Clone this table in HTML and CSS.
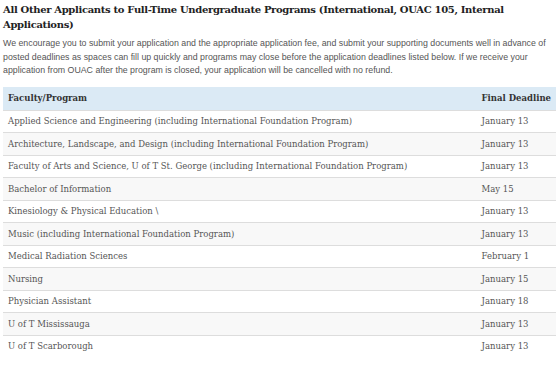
FILE: index.html
```html
<!DOCTYPE html>
<html>
<head>
<meta charset="utf-8">
<link rel="stylesheet" href="styles.css">
</head>
<body>
<div class="page">
  <h2 class="title">All Other Applicants to Full-Time Undergraduate Programs (International, OUAC 105, Internal Applications)</h2>
  <p class="intro">We encourage you to submit your application and the appropriate application fee, and submit your supporting documents well in advance of posted deadlines as spaces can fill up quickly and programs may close before the application deadlines listed below. If we receive your application from OUAC after the program is closed, your application will be cancelled with no refund.</p>
  <table class="deadlines">
    <thead>
      <tr><th class="prog">Faculty/Program</th><th class="date">Final Deadline</th></tr>
    </thead>
    <tbody>
      <tr><td>Applied Science and Engineering (including International Foundation Program)</td><td>January 13</td></tr>
      <tr><td>Architecture, Landscape, and Design (including International Foundation Program)</td><td>January 13</td></tr>
      <tr><td>Faculty of Arts and Science, U of T St. George (including International Foundation Program)</td><td>January 13</td></tr>
      <tr><td>Bachelor of Information</td><td>May 15</td></tr>
      <tr><td>Kinesiology &amp; Physical Education \</td><td>January 13</td></tr>
      <tr><td>Music (including International Foundation Program)</td><td>January 13</td></tr>
      <tr><td>Medical Radiation Sciences</td><td>February 1</td></tr>
      <tr><td>Nursing</td><td>January 15</td></tr>
      <tr><td>Physician Assistant</td><td>January 18</td></tr>
      <tr><td>U of T Mississauga</td><td>January 13</td></tr>
      <tr><td>U of T Scarborough</td><td>January 13</td></tr>
    </tbody>
  </table>
</div>
</body>
</html>
```
FILE: styles.css
```css
html, body {
  margin: 0;
  padding: 0;
  background: #ffffff;
}
.page {
  padding: 2px 4px 0 3px;
}
.title {
  margin: 0;
  font-family: "DejaVu Serif", serif;
  font-weight: bold;
  font-size: 10px;
  letter-spacing: -0.33px;
  line-height: 15px;
  color: #222222;
}
.intro {
  margin: 5px 0 9px 0;
  font-family: "Liberation Sans", Arial, sans-serif;
  font-size: 8.8px;
  line-height: 13.5px;
  color: #555555;
}
.deadlines {
  width: 553px;
  border-collapse: collapse;
  font-family: "DejaVu Serif", serif;
  font-size: 8.5px;
  color: #555555;
}
.deadlines th {
  background: #dbeaf5;
  height: 23px;
  padding: 0 5px;
  text-align: left;
  font-weight: bold;
  color: #333333;
  font-size: 8.5px;
  white-space: nowrap;
}
.deadlines th.date {
  width: 65px;
}
.deadlines td {
  height: 21.5px;
  padding: 0 5px;
  border-top: 1px solid #dddddd;
}
.deadlines tbody tr:nth-child(even) td {
  background: #f8f8f8;
}
```
